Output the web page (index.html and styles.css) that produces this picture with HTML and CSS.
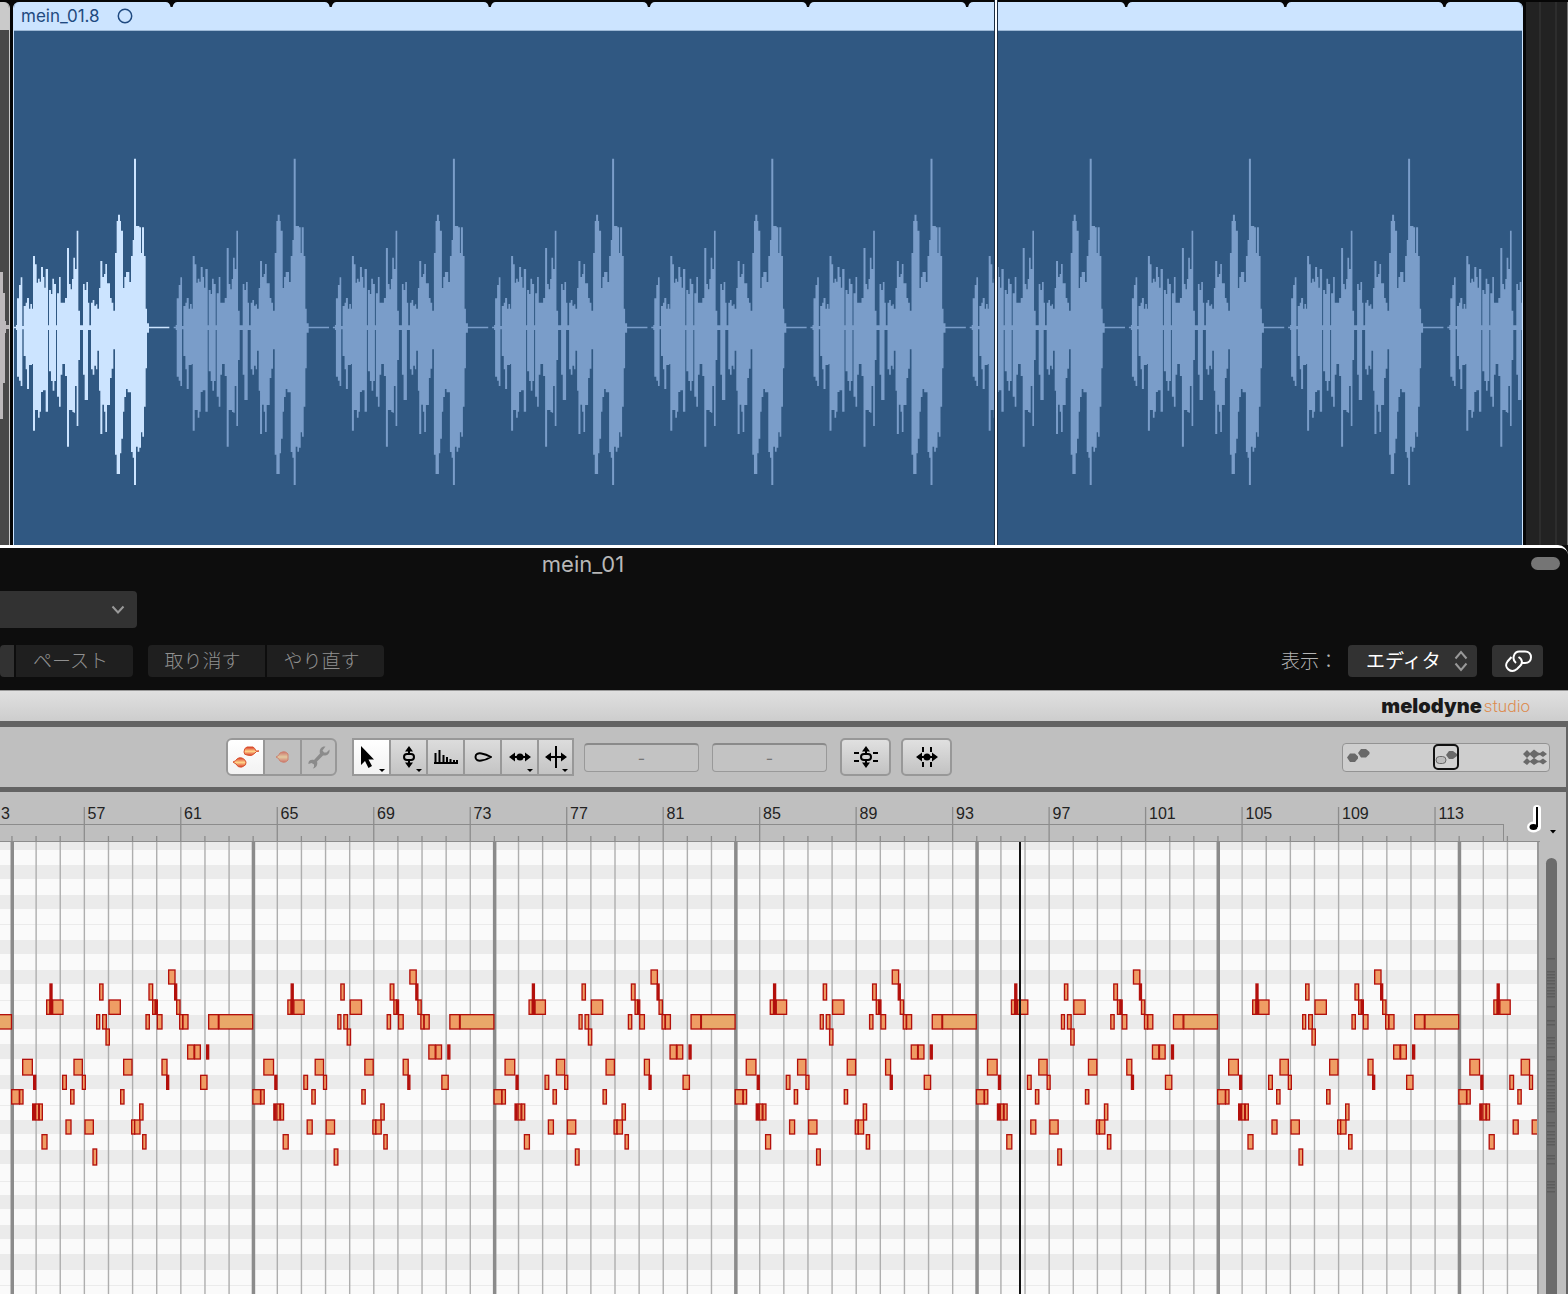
FILE: index.html
```html
<!DOCTYPE html>
<html lang="ja">
<head>
<meta charset="utf-8">
<title>mein_01</title>
<link rel="stylesheet" href="styles.css">
</head>
<body>
<section class="arrange" aria-label="Tracks">
  <div class="prev-region">
    <div class="prev-head"></div>
    <svg class="prev-wave" width="9" height="514"><path d="M0 242h3v21h2v28h1v4h3v4h-3v4h-1v50h-2v36H0z"/></svg>
  </div>
  <article class="region">
    <header class="region-head">
      <span>mein_01.8</span>
      <svg width="16" height="16" viewBox="0 0 16 16"><circle cx="8" cy="8" r="6.7"/></svg>
      <svg class="notches" id="notches"></svg>
    </header>
    <svg class="wave" id="wave"></svg>
  </article>
  <div class="empty-track"></div>
  <div class="arrange-playhead"></div>
</section>

<main class="plugin">
  <header class="host">
    <h1>mein_01</h1>
    <button class="pill" aria-label="Toolbar"></button>
    <div class="preset">
      <select aria-label="プリセット"><option></option></select>
      <svg width="14" height="9" viewBox="0 0 14 9"><path d="M1.500 1.500 7 7.500l5.500-6"/></svg>
    </div>
    <div class="host-row">
      <div class="pair"><button class="stub" aria-label="コピー"></button><button>ペースト</button></div>
      <div class="pair"><button>取り消す</button><button>やり直す</button></div>
      <label class="view-label" for="view">表示：</label>
      <div class="view">
        <select id="view"><option>エディタ</option></select>
        <svg width="14" height="22" viewBox="0 0 14 22"><path d="M1.500 8.500 7 2l5.500 6.500M1.500 13.500 7 20l5.500-6.500"/></svg>
      </div>
      <button class="link" aria-label="リンク">
        <svg width="30" height="22" viewBox="0 0 30 22"><path d="M13 13C8.500 9.500 10.500 1.500 16.500 1.500H22c8 0 8 11.500 0 11.500h-3M15.500 7c4.500 2.500 4 6.500 1.500 9l-3 3c-6 5-14-1.500-9.500-7.500l4-4.500"/></svg>
      </button>
    </div>
  </header>

  <div class="brand"><strong>melodyne</strong><span>studio</span></div>

  <div class="toolbar">
    <div class="modes">
      <button class="on" aria-label="Edit"><svg width="28" height="26" viewBox="0 0 28 26"><defs><linearGradient id="hot" x2="0" y2="1"><stop stop-color="#d9372a"/><stop offset=".5" stop-color="#ffd58a"/><stop offset="1" stop-color="#d9372a"/></linearGradient></defs><path class="blob" d="M12 8q0-4 3-5h6q2 1 3 4h3q-3 0-4 2-3 4-8 2-3 0-3-3z"/><path class="blob" d="M1 18q3-1 4-3 2-2 5-1 3 1 4 4t-4 5q-4 1-6-3z"/></svg></button>
      <button aria-label="Note"><svg class="faded" width="16" height="14" viewBox="0 0 16 14"><path class="blob" d="M1 7q3-1 4-4 5-3 8 1v6q-3 4-8 1-1-3-4-4z"/></svg></button>
      <button aria-label="Settings"><svg width="24" height="24" viewBox="0 0 24 24"><path class="wrench" d="M22.500 4.500l-3 3h-2.500l-1.500-2 3-4c-5-.5-6.500 4-5.500 7l-6 6.500c-4-1-6 1.500-5.500 4l3-1 2.500 1.500v2.500l-1.500 1.500c4-.5 5.500-3.500 4.500-7l6-6c4 .5 7-1.500 6.500-6z"/></svg></button>
    </div>
    <div class="tools">
      <button class="on menu" aria-label="Main tool"><svg width="16" height="24" viewBox="0 0 16 24"><path d="M2 1v19l4-4 3.500 7 3.500-2-3.500-6.500H15z"/></svg></button>
      <button class="menu" aria-label="Pitch tool"><svg width="14" height="24" viewBox="0 0 14 24"><path d="M7 1l4 5.500H3zM7 23l4-5.500H3z"/><path class="line" d="M7 5v4M7 15v4"/><rect class="line" x="2" y="9" width="10" height="6" rx="3"/></svg></button>
      <button aria-label="Formant tool"><svg width="24" height="16" viewBox="0 0 24 16"><path class="line" d="M0 14h24M1.500 14V4M5.500 14V1M9.500 14V6M13 14V8M16.500 14v-4M20 14v-3M23 14v-3"/></svg></button>
      <button aria-label="Amplitude tool"><svg width="18" height="12" viewBox="0 0 18 12"><path class="line" d="M17 6C12 3 1.500-.5 1.500 6S12 9 17 6z"/></svg></button>
      <button class="menu" aria-label="Timing tool"><svg width="22" height="12" viewBox="0 0 22 12"><path class="line" d="M2 6h18"/><path d="M0 6l6-4.500v9zM22 6l-6-4.500v9z"/><circle cx="11" cy="6" r="3.500"/></svg></button>
      <button class="menu" aria-label="Separation tool"><svg width="22" height="22" viewBox="0 0 22 22"><path class="line" d="M2 11h18M11 0v22"/><path d="M0 11l6-4.500v9zM22 11l-6-4.500v9z"/></svg></button>
    </div>
    <input class="field" type="text" value="-" aria-label="Pitch">
    <input class="field" type="text" value="-" aria-label="Cents">
    <button class="macro" aria-label="Correct pitch"><svg width="26" height="24" viewBox="0 0 26 24"><path d="M13 1l4 5.500H9zM13 23l4-5.500H9z"/><path class="line" d="M13 5v4M13 15v4M1 8h5M1 16h5M20 8h5M20 16h5"/><rect class="line" x="8" y="9" width="10" height="6" rx="3"/></svg></button>
    <button class="macro" aria-label="Quantize time"><svg width="22" height="22" viewBox="0 0 22 22"><path class="line" d="M2 11h18M7 1v5M7 16v5M15 1v5M15 16v5"/><path d="M0 11l6-4.500v9zM22 11l-6-4.500v9z"/><circle cx="11" cy="11" r="3.500"/></svg></button>
    <div class="balance">
      <input type="range" min="0" max="100" value="50" aria-label="Track view">
      <svg width="208" height="29" viewBox="0 0 208 29">
        <path class="shape" d="M5 14.500l3-4h5l3 3v2l-3 3.500H8zM16 10l3-4h5l3.500 3v2l-3.500 3.500h-5z"/>
        <path class="shape" d="M104 12l3-4h4l4 3v2l-4 3h-4z"/>
        <rect class="soft" x="94" y="13.500" width="10" height="7" rx="3.500"/>
        <path class="shape" d="M181 11l4-4 3 3 4-3.500 4 3 2 .5 3-2 4 3-4 3-3-2-2 .5-4 3-4-3.500-3 3zM181 19l4-4 3 3 4-3 4 2.500h2l3-2 4 3-4 3-3-2h-2l-4 2.500-4-3-3 3z"/>
      </svg>
    </div>
  </div>

  <div class="ruler">
    <svg class="ticks" id="ticks"></svg>
    <ol><li class="partial">3<li>57<li>61<li>65<li>69<li>73<li>77<li>81<li>85<li>89<li>93<li>97<li>101<li>105<li>109<li>113</ol>
    <button class="unit" aria-label="Time grid">
      <svg width="34" height="32" viewBox="0 0 34 32"><g class="halo"><path d="M12 4v18"/><ellipse cx="8.500" cy="22" rx="2.500" ry="1.500"/></g><path class="stem" d="M12 2v20"/><ellipse cx="8.500" cy="22" rx="4" ry="3"/><path d="M25 25h6l-3 3.500z"/></svg>
    </button>
  </div>

  <div class="editor">
    <svg class="roll" id="roll"></svg>
    <div class="scroll"><svg id="overview" width="11" height="420"></svg></div>
  </div>
</main>
<script src="app.js"></script>
</body>
</html>
```
FILE: styles.css
```css
* { box-sizing: border-box; }
body {
  margin: 0;
  min-height: 100vh;
  display: flex;
  flex-direction: column;
  background: #0d0d0d;
  font-family: Inter, "Noto Sans CJK JP", sans-serif;
  overflow-x: hidden;
}
button, select, input { font: inherit; margin: 0; padding: 0; border: 0; border-radius: 0; }
svg { display: block; }

.arrange {
  position: relative;
  display: flex;
  gap: 3px;
  height: 545px;
  padding-top: 2px;
  background: #060606;
}
.prev-region { width: 10px; background: #484848; border-right: 1px solid #c9c9c9; border-radius: 0 6px 0 0; overflow: hidden; }
.prev-head { height: 28px; background: #cacaca; }
.prev-wave { fill: #bdb9bb; }
.region {
  flex: 1;
  min-width: 0;
  display: flex;
  flex-direction: column;
  background: #305882;
  border: 1px solid #cce4ff;
  border-width: 0 1px;
  border-radius: 6px 6px 0 0;
  overflow: hidden;
}
.region-head {
  position: relative;
  display: flex;
  align-items: center;
  gap: 17px;
  height: 29px;
  padding-left: 7px;
  background: #cce4ff;
  border-bottom: 1px solid #9cb8d6;
  color: #1f4a80;
  font-size: 17px;
}
.region-head circle { fill: none; stroke: #1f4a80; stroke-width: 1.5; }
.notches { position: absolute; left: 0; top: 0; width: 100%; height: 8px; fill: #060606; }
.wave { flex: 1; width: 100%; fill: #7a9dc9; }
.wave .active { fill: #cce4ff; }
.empty-track {
  width: 42px;
  background: linear-gradient(#2d2d2d, #2d2d2d) 13px 0 / 2px 100% no-repeat,
    linear-gradient(#2d2d2d, #2d2d2d) 29px 0 / 2px 100% no-repeat, #222;
  border-right: 1px solid #777;
}
.arrange-playhead { position: absolute; left: 994px; top: 0; width: 4px; height: 100%; background: #fff; border: solid #1a2c42; border-width: 0 1px; }

.plugin { flex: 1; display: flex; flex-direction: column; border-top: 3px solid #fff; border-radius: 0 10px 0 0; }
.host { position: relative; height: 142px; padding-top: 1px; background: #0d0d0d; color: #8c8c8c; border-radius: 0 8px 0 0; }
.host h1 { width: 1166px; margin: 0; text-align: center; font-size: 22px; line-height: 30px; font-weight: 400; color: #b8b8b8; }
.pill { position: absolute; right: 8px; top: 9px; width: 29px; height: 13px; border-radius: 7px; background: #757575; }
.preset { display: flex; align-items: center; width: 137px; height: 37px; margin-top: 12px; background: #323232; border-radius: 0 4px 4px 0; }
.preset select { flex: 1; height: 100%; background: none; appearance: none; color: inherit; }
.preset svg { margin-right: 12px; }
.preset path, .view path { fill: none; stroke: #999; stroke-width: 2; }
.host-row { display: flex; align-items: center; height: 32px; margin-top: 17px; padding-right: 25px; font-size: 19px; font-weight: 300; }
.pair { display: flex; gap: 2px; margin-right: 15px; }
.pair button { width: 117px; height: 32px; padding: 0 8px 4px 0; background: #1f1f1f; color: #909090; }
.pair button:first-child { border-radius: 4px 0 0 4px; }
.pair button:last-child { border-radius: 0 4px 4px 0; }
.pair .stub { width: 14px; padding: 0; background: #323232; border-radius: 0; }
.view-label { margin-left: auto; margin-right: 10px; padding-bottom: 4px; color: #b4b4b4; }
.view { position: relative; width: 129px; height: 32px; }
.view select { width: 100%; height: 100%; padding-left: 18px; background: #323232; border-radius: 4px; color: #fff; font-weight: 400; appearance: none; }
.view svg { position: absolute; right: 9px; top: 5px; pointer-events: none; }
.link { display: flex; align-items: center; justify-content: center; width: 51px; height: 32px; margin-left: 15px; background: #323232; border-radius: 4px; }
.link path { fill: none; stroke: #fff; stroke-width: 2; }

.brand {
  display: flex;
  justify-content: flex-end;
  align-items: center;
  gap: 2px;
  height: 31px;
  padding-right: 38px;
  background: linear-gradient(#e0e0e0, #cdcdcd);
  border-top: 1px solid #999;
  line-height: 28px;
}
.brand strong { font-size: 20px; font-weight: 900; color: #1a1a1a; }
.brand span { font-family: Roboto, sans-serif; font-size: 17px; font-weight: 300; color: #dd8a4c; }

.toolbar {
  display: flex;
  align-items: center;
  height: 71px;
  padding: 0 16px 0 226px;
  background: #bfbfbf;
  border: solid #636363;
  border-width: 6px 2px 5px 0;
}
.modes, .tools { display: flex; height: 38px; border: 2px solid #989898; }
.modes { border-radius: 6px; margin-right: 15px; }
.modes button, .tools button {
  position: relative;
  display: flex;
  align-items: center;
  justify-content: center;
  width: 35px;
  background: none;
}
.modes button + button, .tools button + button { width: 37px; border-left: 2px solid #989898; }
.modes button:last-child, .tools button:last-child { width: 35px; }
.modes .on, .tools .on { background: linear-gradient(#fff, #f2f2f2); }
.modes .on { border-radius: 4px 0 0 4px; }
.tools button { background: linear-gradient(#dcdcdc, #c4c4c4); }
.tools .on svg { margin-right: 10px; }
.menu::after { content: ""; position: absolute; right: 4px; bottom: 2px; border: 3px solid transparent; border-top-color: #000; border-bottom: 0; }
.blob { fill: url(#hot); stroke: #d9532f; stroke-width: 1; }
.faded { opacity: .55; }
.wrench { fill: #8b8b8b; }
.line { fill: none; stroke: #000; stroke-width: 2; }
.field {
  width: 115px;
  height: 29px;
  margin-left: 10px;
  text-align: center;
  font-size: 16px;
  color: #777;
  background: #c3c3c3;
  border: 1px solid #999;
  border-top: 2px solid #8a8a8a;
  border-radius: 4px;
}
.field + .field { margin-left: 13px; }
.macro {
  display: flex;
  align-items: center;
  justify-content: center;
  width: 51px;
  height: 38px;
  margin-left: 13px;
  background: linear-gradient(#e0e0e0, #c2c2c2);
  border: 2px solid #989898;
  border-radius: 5px;
}
.macro + .macro { margin-left: 10px; }
.balance { position: relative; width: 208px; height: 29px; margin-left: auto; }
.balance input { display: block; appearance: none; width: 208px; height: 29px; padding: 0 1px; background: #cecece; border: 1px solid #939393; border-radius: 4px; }
.balance input::-webkit-slider-thumb { appearance: none; width: 26px; height: 26px; border: 2px solid #111; border-radius: 5px; background: #d2d2d2; }
.balance svg { position: absolute; left: 0; top: 0; pointer-events: none; }
.shape { fill: #696969; }
.soft { fill: #bdbdbd; stroke: #696969; stroke-width: 1; }

.ruler { position: relative; display: flex; height: 50px; background: #bfbfbf; border-right: 2px solid #636363; overflow: hidden; }
.ruler ol {
  position: relative;
  display: grid;
  grid-template-columns: repeat(16, 1fr);
  flex: 1;
  margin: 0 0 0 -12px;
  padding: 0;
  list-style: none;
  font-family: "Liberation Sans", sans-serif;
  font-size: 16px;
  line-height: 20px;
  color: #222;
}
.ruler li { padding: 12px 0 0 3px; }
.ruler .partial { padding-left: 13px; }
.ticks { position: absolute; left: 0; top: 0; width: 100%; height: 50px; }
.unit { position: relative; width: 34px; height: 32px; margin: 13px 7px 0 -7px; background: none; }
.unit .halo { fill: #fff; stroke: #fff; stroke-width: 8; stroke-linecap: round; }
.unit .stem { stroke: #000; stroke-width: 2; }

.editor { flex: 1; display: flex; gap: 7px; background: #bfbfbf; border-right: 2px solid #636363; }
.roll { flex: 1; min-width: 0; height: 452px; background: #fafafa; border-right: 2px solid #999; }
.scroll { width: 11px; margin: 16px 9px 0 0; background: #6c6c6c; border-radius: 6px 6px 0 0; }
.scroll svg { fill: #5c5c5c; }
.lane { fill: #ebebeb; }
.bar { fill: #aeaeae; }
.tick { fill: #8c8c8c; }
.section { fill: #8b8b8b; }
.note { fill: #ef9d64; stroke: #b3100c; stroke-width: 4; }
.note.long { fill: #e9a869; }
.note.short { fill: #b3100c; }
.playhead { fill: #111; }
```
FILE: app.js
```js
const NS = "http://www.w3.org/2000/svg";
function add(parent, tag, attrs) {
  const el = document.createElementNS(NS, tag);
  for (const key in attrs) el.setAttribute(key, attrs[key]);
  parent.appendChild(el);
  return el;
}
const byId = id => document.getElementById(id);
const rect = (parent, cls, x, y, width, height) => add(parent, "rect", { class: cls, x, y, width, height });

// Waveform of one loop: pairs of start and level, in thirds of a pixel.
const upper = [42,530,48,525,51,445,57,405,62,382,67,528,71,468,77,458,81,444,87,476,91,462,96,476,99,318,105,343,110,398,114,386,119,395,123,351,129,381,133,413,137,357,144,526,147,420,153,432,157,386,162,402,168,526,171,430,177,381,182,458,195,444,201,294,207,402,212,418,216,387,220,323,225,357,230,242,235,482,240,526,249,402,254,420,259,396,264,458,268,526,273,458,278,450,283,467,288,463,292,476,297,414,301,333,307,381,312,372,316,342,321,400,330,444,335,458,340,482,345,309,350,213,354,194,360,213,363,242,369,414,373,381,378,366,388,396,393,318,398,270,402,26,408,228,418,232,423,309,426,232,432,318,437,476,441,520,447,530,508,530];
const lower = [42,535,48,540,51,680,57,692,62,708,67,538,71,618,77,658,81,717,87,645,96,642,99,842,105,780,114,803,119,785,123,726,129,721,137,785,144,540,147,664,153,693,158,722,163,693,168,540,171,740,177,770,182,674,187,642,195,678,201,890,207,780,217,786,221,788,225,708,230,828,235,630,240,540,249,674,254,750,264,540,273,658,278,674,283,647,288,658,292,602,297,722,301,852,307,764,312,785,316,846,321,765,330,684,335,656,340,598,345,914,350,972,360,910,364,866,369,785,373,741,378,717,383,727,393,906,398,923,402,1005,408,890,413,905,418,893,423,847,427,860,432,770,437,655,441,548,447,535,508,535];
function steps(list) {
  let d = "";
  for (let i = 0; i < list.length; i += 2) d += `H${list[i]}V${list[i + 1]}`;
  return d;
}
const loop = "M42 532" + steps(upper) + "V532H42" + steps(lower) + "V532z";
for (let k = 0; k < 14; k++) {
  const x = 159.2 * k;
  add(byId("wave"), "path", { d: loop, class: k ? "" : "active", transform: `translate(${x - 14 + (k ? 0.5 : 0)} 119) scale(.33333)` });
  const n = 159.1 * k - 1.5;
  if (k) add(byId("notches"), "path", { d: `M${n - 6} 0Q${n - 2} 0 ${n - 1} 5h2Q${n + 2} 0 ${n + 6} 0z` });
}

// Ruler ticks and bar lines.
const ticks = byId("ticks"), roll = byId("roll");
[[0,8],[23,14],[53,14],[82,1],[98,14],[128,14],[158,1],[173,14],[202,15],[233,14],[263,1],[278,14],[308,14],[339,1],[353,14],[383,14],[412,16],[443,1]]
  .forEach(([y, h]) => rect(roll, "lane", 0, y, "100%", h));
for (let k = 0; k < 63; k++) {
  const x = 11.3 + 24.12 * k, major = k % 4 === 3;
  rect(ticks, "tick", x, major ? 15 : 44, 1.3, major ? 35 : 6);
  rect(roll, "bar", x, 0, 1.4, "100%");
}
rect(ticks, "tick", 0, 32, 1503, 1);
rect(ticks, "tick", 1503, 32, 1, 17);
rect(ticks, "tick", 0, 49, 1540, 1);
for (let k = 0; k < 9; k++) rect(roll, "section", 10.5 + 241.2 * k, 0, 3.5, "100%");

// Notes of one loop, by pitch row: [top, height, [start, end], ...] in thirds of a pixel.
const rows = [
  [58, 45, [504,527]],
  [100, 51, [148,158],[297,311],[445,460],[522,532]],
  [148, 46, [138,152],[148,158],[156,191],[325,363],[456,468],[464,474],[528,542]],
  [192, 46, [288,301],[306,321],[436,450],[470,488],[537,550],[547,566],[624,657],[655,760]],
  [235, 51, [316,330]],
  [283, 45, [561,584],[582,603],[618,628]],
  [326, 50, [66,99],[220,249],[369,398],[484,503]],
  [374, 45, [99,109],[186,201],[245,258],[498,508],[600,623]],
  [417, 46, [33,60],[57,71],[210,224],[360,374]],
  [460, 51, [96,106],[105,118],[116,129],[417,431]],
  [508, 45, [196,215],[253,282],[393,406],[402,422]],
  [552, 46, [124,143],[426,440]],
  [595, 51, [277,292]]
];
for (let k = -1; k < 9; k++) {
  const g = add(roll, "g", { transform: `translate(${241.2 * k} 108) scale(.33333)` });
  for (const [top, h, ...notes] of rows)
    for (const [a, b] of notes) {
      const kind = b - a > 90 ? "long" : b - a < 11 ? "short" : "";
      rect(g, "note " + kind, a + 2, top + 2, b - a - 4, h - 3);
    }
}
rect(roll, "playhead", 1019, 0, 2, "100%");

// Note overview on the scroll bar.
[100,113,116,119,122,125,129,132,135,138,148,162,166,179,182,185,189,198,201,212,216,220,223,227,231,234,237,240,244,247,250,253,264,267,273,276,280,283,286,297,300,305,323,326,329,333]
  .forEach(y => rect(byId("overview"), "", 1, y, 8, 1.500));
```
